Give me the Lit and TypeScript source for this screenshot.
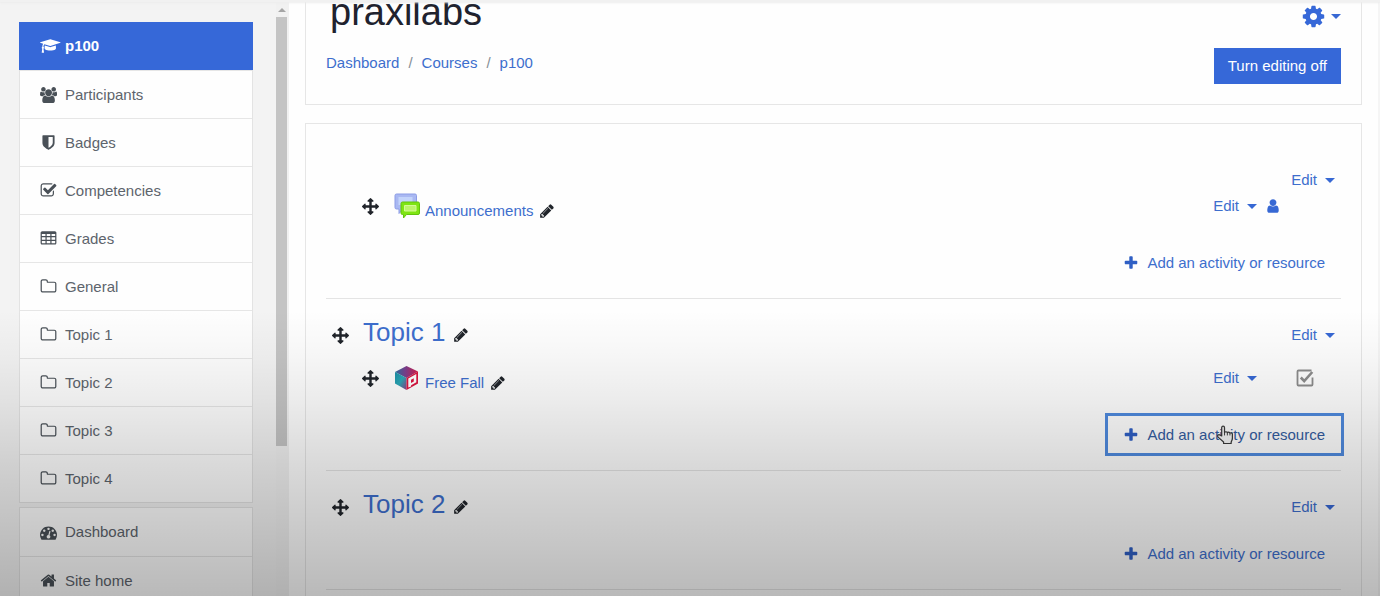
import { LitElement, html, svg, css, nothing } from "lit";
import { customElement, property } from "lit/decorators.js";

interface Glyph {
  width: number;
  path: string;
}

const GLYPHS: Record<string, Glyph> = {
  cap: {
    width: 2304,
    path: "M1774 836l18 316q4 69-82 128t-235 93.5-323 34.5-323-34.5-235-93.5-82-128l18-316 574 181q22 7 48 7t48-7zm530-324q0 23-22 31l-1120 352q-4 1-10 1t-10-1l-652-206q-43 34-71 111.5t-34 178.5q63 36 63 109 0 69-58 107l58 433q2 14-8 25-9 11-24 11h-192q-15 0-24-11-10-11-8-25l58-433q-58-38-58-107 0-73 65-111 11-207 98-330l-333-104q-22-8-22-31t22-31l1120-352q4-1 10-1t10 1l1120 352q22 8 22 31z",
  },
  users: {
    width: 1920,
    path: "M593 896q-162 5-265 128h-134q-82 0-138-40.5t-56-118.5q0-353 124-353 6 0 43.5 21t97.5 42.5 119 21.5q67 0 133-23-5 37-5 66 0 139 81 256zm1071 637q0 120-73 189.5t-194 69.5h-874q-121 0-194-69.5t-73-189.5q0-53 3.5-103.5t14-109 26.5-108.5 43-97.5 62-81 85.5-53.5 111.5-20q10 0 43 21.5t73 48 107 48 135 21.5 135-21.5 107-48 73-48 43-21.5q61 0 111.5 20t85.5 53.5 62 81 43 97.5 26.5 108.5 14 109 3.5 103.5zm-1024-1277q0 106-75 181t-181 75-181-75-75-181 75-181 181-75 181 75 75 181zm704 384q0 159-112.5 271.5t-271.5 112.5-271.5-112.5-112.5-271.5 112.5-271.5 271.5-112.5 271.5 112.5 112.5 271.5zm576 225q0 78-56 118.5t-138 40.5h-134q-103-123-265-128 81-117 81-256 0-29-5-66 66 23 133 23 59 0 119-21.5t97.5-42.5 43.5-21q124 0 124 353zm-128-609q0 106-75 181t-181 75-181-75-75-181 75-181 181-75 181 75 75 181z",
  },
  shield: {
    width: 1792,
    path: "M1344 960v-640h-448v1137q119-63 213-137 235-184 235-360zm192-768v768q0 86-33.5 170.5t-83 150-118 127.5-126.5 103-121 77.5-89.5 49.5-42.5 20q-12 6-26 6t-26-6q-16-7-42.5-20t-89.5-49.5-121-77.5-126.5-103-118-127.5-83-150-33.5-170.5v-768q0-26 19-45t45-19h1152q26 0 45 19t19 45z",
  },
  check: {
    width: 1792,
    path: "M1472 930v318q0 119-84.5 203.5t-203.5 84.5h-832q-119 0-203.5-84.5t-84.5-203.5v-832q0-119 84.5-203.5t203.5-84.5h832q63 0 117 25 15 7 18 23 3 17-9 29l-49 49q-10 10-23 10-3 0-9-2-23-6-45-6h-832q-66 0-113 47t-47 113v832q0 66 47 113t113 47h832q66 0 113-47t47-113v-254q0-13 9-22l64-64q10-10 23-10 6 0 12 3 20 8 20 29zm231-489l-814 814q-24 24-57 24t-57-24l-430-430q-24-24-24-57t24-57l110-110q24-24 57-24t57 24l263 263 647-647q24-24 57-24t57 24l110 110q24 24 24 57t-24 57z",
  },
  table: {
    width: 1792,
    path: "M224 128h1344q66 0 113 47t47 113v1088q0 66-47 113t-113 47h-1344q-66 0-113-47t-47-113v-1088q0-66 47-113t113-47zM192 416v224h384v-224zM704 416v224h384v-224zM1216 416v224h384v-224zM192 768v256h384v-256zM704 768v256h384v-256zM1216 768v256h384v-256zM192 1152v256h384v-256zM704 1152v256h384v-256zM1216 1152v256h384v-256z",
  },
  folder: {
    width: 1792,
    path: "M1600 1312v-704q0-40-28-68t-68-28h-704q-40 0-68-28t-28-68v-64q0-40-28-68t-68-28h-320q-40 0-68 28t-28 68v960q0 40 28 68t68 28h1216q40 0 68-28t28-68zm128-704v704q0 92-66 158t-158 66h-1216q-92 0-158-66t-66-158v-960q0-92 66-158t158-66h320q92 0 158 66t66 158v32h672q92 0 158 66t66 158z",
  },
  gauge: {
    width: 1792,
    path: "M384 1152q0-53-37.5-90.5t-90.5-37.5-90.5 37.5-37.5 90.5 37.5 90.5 90.5 37.5 90.5-37.5 37.5-90.5zm192-448q0-53-37.5-90.5t-90.5-37.5-90.5 37.5-37.5 90.5 37.5 90.5 90.5 37.5 90.5-37.5 37.5-90.5zm428 481l101-382q6-26-7.5-48.5t-38.5-29.5-48 6.5-30 39.5l-101 382q-60 5-107 43.5t-63 98.5q-20 77 20 146t117 89 146-20 89-117q16-60-6-117t-72-91zm660-33q0-53-37.5-90.5t-90.5-37.5-90.5 37.5-37.5 90.5 37.5 90.5 90.5 37.5 90.5-37.5 37.5-90.5zm-640-640q0-53-37.5-90.5t-90.5-37.5-90.5 37.5-37.5 90.5 37.5 90.5 90.5 37.5 90.5-37.5 37.5-90.5zm448 192q0-53-37.5-90.5t-90.5-37.5-90.5 37.5-37.5 90.5 37.5 90.5 90.5 37.5 90.5-37.5 37.5-90.5zm320 448q0 261-141 483-19 29-54 29h-1402q-35 0-54-29-141-221-141-483 0-182 71-348t191-286 286-191 348-71 348 71 286 191 191 286 71 348z",
  },
  home: {
    width: 1792,
    path: "M1472 992v480q0 26-19 45t-45 19h-384v-384h-256v384h-384q-26 0-45-19t-19-45v-480q0-1 .5-3t.5-3l575-474 575 474q1 2 1 6zm223-69l-62 74q-8 9-21 11h-3q-13 0-21-7l-692-577-692 577q-12 8-24 7-13-2-21-11l-62-74q-8-10-7-23.5t11-21.5l719-599q32-26 76-26t76 26l244 204v-195q0-14 9-23t23-9h192q14 0 23 9t9 23v408l219 182q10 8 11 21.5t-7 23.5z",
  },
  cog: {
    width: 1792,
    path: "M1152 896q0-106-75-181t-181-75-181 75-75 181 75 181 181 75 181-75 75-181zm512-109v222q0 12-8 23t-20 13l-185 28q-19 54-39 91 35 50 107 138 10 12 10 25t-9 23q-27 37-99 108t-94 71q-12 0-26-9l-138-108q-44 23-91 38-16 136-29 186-7 28-36 28h-222q-14 0-24.5-8.5t-11.5-21.5l-28-184q-49-16-90-37l-141 107q-10 9-25 9-14 0-25-11-126-114-165-168-7-10-7-23 0-12 8-23 15-21 51-66.5t54-70.5q-27-50-41-99l-183-27q-13-2-21-12.5t-8-23.5v-222q0-12 8-23t19-13l186-28q14-46 39-92-40-57-107-138-10-12-10-24 0-10 9-23 26-36 98.5-107.5t94.5-71.5q13 0 26 10l138 107q44-23 91-38 16-136 29-186 7-28 36-28h222q14 0 24.5 8.5t11.5 21.5l28 184q49 16 90 37l142-107q9-9 24-9 13 0 25 10 129 119 165 170 7 8 7 22 0 12-8 23-15 21-51 66.5t-54 70.5q26 50 41 98l183 28q13 2 21 12.5t8 23.5z",
  },
  pencil: {
    width: 1792,
    path: "M491 1536l91-91-235-235-91 91v107h128v128h107zm523-928q0-22-22-22-10 0-17 7l-542 542q-7 7-7 17 0 22 22 22 10 0 17-7l542-542q7-7 7-17zm-54-192l416 416-832 832h-416v-416zm683 96q0 53-37 90l-166 166-416-416 166-165q36-38 90-38 53 0 91 38l235 234q37 39 37 91z",
  },
  move: {
    width: 1792,
    path: "M1792 896q0 26-19 45l-256 256q-19 19-45 19t-45-19-19-45v-128h-384v384h128q26 0 45 19t19 45-19 45l-256 256q-19 19-45 19t-45-19l-256-256q-19-19-19-45t19-45 45-19h128v-384h-384v128q0 26-19 45t-45 19-45-19l-256-256q-19-19-19-45t19-45l256-256q19-19 45-19t45 19 19 45v128h384v-384h-128q-26 0-45-19t-19-45 19-45l256-256q19-19 45-19t45 19l256 256q19 19 19 45t-19 45-45 19h-128v384h384v-128q0-26 19-45t45-19 45 19l256 256q19 19 19 45z",
  },
  user: {
    width: 1792,
    path: "M1536 1399q0 109-62.5 187t-150.5 78h-854q-88 0-150.5-78t-62.5-187q0-85 8.5-160.5t31.5-152 58.5-131 94-89 134.5-34.5q131 128 313 128t313-128q76 0 134.5 34.5t94 89 58.5 131 31.5 152 8.5 160.5zm-256-887q0 159-112.5 271.5t-271.5 112.5-271.5-112.5-112.5-271.5 112.5-271.5 271.5-112.5 271.5 112.5 112.5 271.5z",
  },
  plus: {
    width: 1792,
    path: "M1600 736v192q0 40-28 68t-68 28h-416v416q0 40-28 68t-68 28h-192q-40 0-68-28t-28-68v-416h-416q-40 0-68-28t-28-68v-192q0-40 28-68t68-28h416v-416q0-40 28-68t68-28h192q40 0 68 28t28 68v416h416q40 0 68 28t28 68z",
  },
};

function icon(name: string) {
  const glyph = GLYPHS[name];
  return html`<svg
    class="icon icon-${name}"
    viewBox="0 0 ${glyph.width} 1792"
    aria-hidden="true"
  >
    ${svg`<path fill-rule="evenodd" d=${glyph.path} />`}
  </svg>`;
}

const shared = css`
  *,
  *::before {
    box-sizing: border-box;
  }
  .icon {
    display: block;
    flex: none;
    height: 17px;
    fill: currentColor;
  }
  a {
    color: #3d6ecd;
    text-decoration: none;
  }
  button {
    margin: 0;
    padding: 0;
    border: 0;
    background: none;
    color: #3d6ecd;
    font: inherit;
    cursor: pointer;
  }
  .caret {
    flex: none;
    border: 5px solid transparent;
    border-top-color: #3768d4;
    border-bottom: 0;
  }
`;

@customElement("course-nav")
export class CourseNav extends LitElement {
  static styles = [
    shared,
    css`
      :host {
        display: flex;
        overflow: hidden;
        background: #f3f3f3;
      }
      nav {
        flex: 1;
        display: flex;
        flex-direction: column;
        gap: 4px;
        padding: 20px 23px 0 19px;
      }
      ul {
        flex: none;
        margin: 0;
        padding: 0;
        list-style: none;
        border: 1px solid #e3e3e3;
        border-top: 0;
        background: #fefefe;
      }
      ul + ul {
        border-top: 1px solid #e3e3e3;
      }
      li {
        height: 48px;
      }
      li + li {
        border-top: 1px solid #e6e6e6;
      }
      .link {
        display: flex;
        align-items: center;
        height: 100%;
        padding-left: 20px;
        color: #5d646c;
      }
      .glyph {
        flex: none;
        display: flex;
        width: 25px;
        color: #495057;
      }
      .icon-cap,
      .icon-users {
        height: 16px;
      }
      .current {
        margin: 0 -1px;
      }
      .current .link {
        padding-left: 21px;
        background: #3668d8;
        color: #fff;
        font-weight: 700;
      }
      .current .glyph {
        color: #fff;
      }
      .track {
        flex: none;
        width: 13px;
        padding: 6px 2px 0 0;
        background: #f1f1f1;
      }
      .up {
        width: 8px;
        margin: 0 auto;
        border: 4px solid transparent;
        border-top: 0;
        border-bottom-color: #a5a5a5;
      }
      .thumb {
        height: 73%;
        margin-top: 5px;
        background: #c4c4c4;
      }
    `,
  ];

  private course = [
    ["cap", "p100"],
    ["users", "Participants"],
    ["shield", "Badges"],
    ["check", "Competencies"],
    ["table", "Grades"],
    ["folder", "General"],
    ["folder", "Topic 1"],
    ["folder", "Topic 2"],
    ["folder", "Topic 3"],
    ["folder", "Topic 4"],
  ];

  private site = [
    ["gauge", "Dashboard"],
    ["home", "Site home"],
  ];

  private list(items: string[][]) {
    return html`<ul>
      ${items.map(
        ([glyph, label]) => html`<li class=${glyph === "cap" ? "current" : ""}>
          <a class="link" href="#"><span class="glyph">${icon(glyph)}</span>${label}</a>
        </li>`
      )}
    </ul>`;
  }

  render() {
    return html`
      <nav aria-label="Course">${this.list(this.course)}${this.list(this.site)}</nav>
      <div class="track" aria-hidden="true">
        <div class="up"></div>
        <div class="thumb"></div>
      </div>
    `;
  }
}

interface Activity {
  name: string;
  kind: "forum" | "lab";
}

const forumIcon = svg`<svg class="art" viewBox="0 0 26 26" aria-hidden="true">
  <path d="M2.5 1h18.5q1.500 0 1.500 1.500v12q0 1.500-1.500 1.500H9l-4 4.500V16H2.500Q1 16 1 14.500v-12Q1 1 2.500 1z" fill="#a9b8f2" stroke="#8c9ce6"/>
  <path d="M4.500 4h14v8h-14z" fill="#c3d4fb"/>
  <path d="M8.500 9h15.500q1.500 0 1.500 1.500V20q0 1.500-1.500 1.500H12.500L9.500 25v-3.500H8.500Q7 21.500 7 20v-9.500Q7 9 8.500 9z" fill="#7fe512" stroke="#62c40c"/>
  <path d="M10.500 12.500h11.500v5.500H10.500z" fill="#bdf56b" stroke="#d3fb95"/>
</svg>`;

const labIcon = svg`<svg class="art" viewBox="0 0 26 26" aria-hidden="true">
  <defs>
    <linearGradient id="top" x1="0" x2="1"><stop offset="0" stop-color="#2b6f9f"/><stop offset="0.45" stop-color="#7a3f8e"/><stop offset="1" stop-color="#d61a48"/></linearGradient>
    <linearGradient id="side" x1="0" x2="1" y1="0" y2="1"><stop offset="0" stop-color="#1c8ea6"/><stop offset="0.5" stop-color="#2aa7b5"/><stop offset="1" stop-color="#8a3f86"/></linearGradient>
  </defs>
  <path d="M12.500 1L24 6.500 12.500 13 1 7z" fill="url(#top)"/>
  <path d="M1 7l11.500 6v12L1 18.500z" fill="url(#side)"/>
  <path d="M12.500 13L24 6.500v12L12.500 25z" fill="#d9143f"/>
  <path d="M14.300 22.500V13.500L22.300 9v8.200l-5.200 3v1.300z M17 14.800v3.200l2.800-1.600v-3.200z" fill="#fff" fill-rule="evenodd"/>
</svg>`;

@customElement("course-section")
export class CourseSection extends LitElement {
  @property() heading = "";
  @property({ attribute: false }) activities: Activity[] = [];
  @property({ type: Boolean }) active = false;

  static styles = [
    shared,
    css`
      :host {
        display: block;
        padding: 18px 0 14px;
        border-bottom: 1px solid #e4e4e4;
      }
      .head {
        display: flex;
        align-items: center;
        justify-content: flex-end;
        min-height: 20px;
        padding-right: 6px;
      }
      .titled {
        height: 36px;
        margin-bottom: 9px;
      }
      .move {
        display: flex;
        width: 17px;
        color: #20242a;
      }
      .titled .move {
        margin: 0 14px 0 6px;
      }
      h3 {
        margin: 0 8px 6px 0;
        color: #3d6ecd;
        font-size: 26px;
        line-height: 30px;
        font-weight: 400;
      }
      .rename {
        margin-right: auto;
        color: #20242a;
      }
      .edit {
        display: flex;
        align-items: center;
        gap: 8px;
        line-height: 20px;
      }
      .activity {
        display: flex;
        align-items: center;
        height: 32px;
        margin-bottom: 19px;
        padding-left: 36px;
      }
      .art {
        width: 26px;
        height: 26px;
        margin: 0 5px 0 15px;
      }
      .name {
        display: flex;
        align-items: center;
        align-self: flex-end;
        gap: 6px;
        margin-right: auto;
        line-height: 22px;
      }
      .icon-pencil {
        height: 16px;
      }
      .status {
        display: flex;
        width: 84px;
        padding-left: 8px;
      }
      .status.tick {
        padding-left: 39px;
      }
      .icon-user {
        height: 16px;
        color: #3768d4;
      }
      .done {
        display: grid;
      }
      .done > * {
        grid-area: 1 / 1;
        width: 18px;
        height: 18px;
      }
      .box {
        appearance: none;
        margin: 0;
      }
      .more {
        display: flex;
        justify-content: flex-end;
        margin-right: -3px;
      }
      .titled + .more {
        margin-top: -2px;
      }
      .add {
        position: relative;
        display: flex;
        align-items: center;
        gap: 8px;
        height: 43px;
        padding: 0 16px 0 15px;
        border: 3px solid transparent;
      }
      .add.active {
        border-color: #4f8ade;
        color: #345c9f;
      }
      .icon-plus {
        height: 16px;
        color: #2f5fc4;
      }
      .pointer {
        position: absolute;
        left: 108px;
        top: 9px;
        width: 18px;
        height: 19px;
      }
    `,
  ];

  private edit() {
    return html`<button class="edit" aria-haspopup="menu">
      Edit<span class="caret"></span>
    </button>`;
  }

  private row(activity: Activity) {
    const lab = activity.kind === "lab";
    return html`<div class="activity">
      <button class="move" aria-label="Move ${activity.name}">${icon("move")}</button>
      ${lab ? labIcon : forumIcon}
      <span class="name">
        <a href="#">${activity.name}</a>
        <button class="rename" aria-label="Rename ${activity.name}">${icon("pencil")}</button>
      </span>
      ${this.edit()}
      <span class="status ${lab ? "tick" : ""}">
        ${lab
          ? html`<label class="done"
              ><input class="box" type="checkbox" checked aria-label="Completion" />
              <svg viewBox="0 0 18 18" fill="none" stroke="#8c8c8c" aria-hidden="true">
                <path
                  d="M16.500 8.500V15.500Q16.500 16.500 15.500 16.500H2.500Q1.500 16.500 1.500 15.500V2.500Q1.500 1.500 2.500 1.500H15.500"
                  stroke-width="1.800"
                />
                <path d="M4.800 8.500l3.400 3.500L16.300 3" stroke-width="2.600" />
              </svg>
            </label>`
          : html`<button aria-label="Group mode">${icon("user")}</button>`}
      </span>
    </div>`;
  }

  render() {
    return html`
      <div class="head ${this.heading ? "titled" : ""}">
        ${this.heading
          ? html`<button class="move" aria-label="Move section">${icon("move")}</button>
              <h3><a href="#">${this.heading}</a></h3>
              <button class="rename" aria-label="Rename section">${icon("pencil")}</button>`
          : nothing}
        ${this.edit()}
      </div>
      ${this.activities.map((activity) => this.row(activity))}
      <div class="more">
        <button class="add ${this.active ? "active" : ""}">
          ${icon("plus")}Add an activity or resource
          ${this.active
            ? html`<svg class="pointer" viewBox="0 0 19 20" aria-hidden="true">
                <path
                  d="M6 11.500V3q0-1.800 1.500-1.800T9 3v5q.3-.9 1.500-.9t1.500 1.100q.3-.7 1.400-.7t1.300 1.200q.3-.5 1.200-.5 1.400 0 1.400 1.600v4q0 2.200-1.300 4.200v1.500H8v-1.500L2.200 12.800Q1.200 11.300 2.200 10.500t2.300.2z"
                  fill="#f4f4f4"
                  stroke="#3a3a3a"
                  stroke-width="1.300"
                  stroke-linejoin="round"
                />
                <path d="M9 8v3M12 8.500V11M14.700 9v2" stroke="#3a3a3a" fill="none" />
              </svg>`
            : nothing}
        </button>
      </div>
    `;
  }
}

@customElement("app-root")
export class AppRoot extends LitElement {
  static styles = [
    shared,
    css`
      :host {
        position: relative;
        display: grid;
        grid-template: 2px minmax(0, 1fr) / 289px minmax(0, 1fr);
        height: 100vh;
        overflow: hidden;
        background: #fefefe;
        font: 15px/20px "Liberation Sans", Arial, sans-serif;
      }
      .bar {
        z-index: 1;
        grid-column: 1 / -1;
        background: #f1f1f1;
        box-shadow: 0 1px 2px #ececec;
      }
      main {
        overflow: hidden;
        padding: 0 16px;
        border-right: 2px solid #f5f5f5;
      }
      .card {
        border: 1px solid #e6e6e6;
        padding: 20px;
      }
      .intro {
        display: flex;
        justify-content: space-between;
        margin-top: -33px;
      }
      h1 {
        margin: 0 0 19px 4px;
        color: #20222e;
        font-size: 38px;
        line-height: 44px;
        font-weight: 400;
      }
      ol {
        display: flex;
        margin: 0;
        padding: 0;
        list-style: none;
      }
      li + li::before {
        content: "/";
        padding: 0 9px;
        color: #868e96;
      }
      .tools {
        display: flex;
        flex-direction: column;
        align-items: flex-end;
        gap: 19px;
        padding-top: 14px;
      }
      .settings {
        display: flex;
        align-items: center;
        gap: 5px;
        color: #3668d8;
      }
      .icon-cog {
        height: 25px;
      }
      .toggle {
        height: 36px;
        padding: 0 14px;
        background: #3668d8;
        color: #fff;
      }
      .content {
        margin-top: 18px;
        padding-top: 28px;
      }
      .shade {
        position: absolute;
        inset: 52% 0 0;
        z-index: 2;
        pointer-events: none;
        background: linear-gradient(
          rgba(0, 0, 0, 0),
          rgba(0, 0, 0, 0.03) 16%,
          rgba(0, 0, 0, 0.075) 32%,
          rgba(0, 0, 0, 0.145) 54%,
          rgba(0, 0, 0, 0.27)
        );
      }
    `,
  ];

  render() {
    return html`
      <div class="bar"></div>
      <course-nav></course-nav>
      <main>
        <header class="card intro">
          <div>
            <h1>praxilabs</h1>
            <ol aria-label="Breadcrumb">
              <li><a href="#">Dashboard</a></li>
              <li><a href="#">Courses</a></li>
              <li><a href="#">p100</a></li>
            </ol>
          </div>
          <div class="tools">
            <button class="settings" aria-label="Course settings">
              ${icon("cog")}<span class="caret"></span>
            </button>
            <button class="toggle">Turn editing off</button>
          </div>
        </header>
        <div class="card content">
          <course-section
            .activities=${[{ name: "Announcements", kind: "forum" }]}
          ></course-section>
          <course-section
            heading="Topic 1"
            active
            .activities=${[{ name: "Free Fall", kind: "lab" }]}
          ></course-section>
          <course-section heading="Topic 2"></course-section>
        </div>
      </main>
      <div class="shade"></div>
    `;
  }
}
